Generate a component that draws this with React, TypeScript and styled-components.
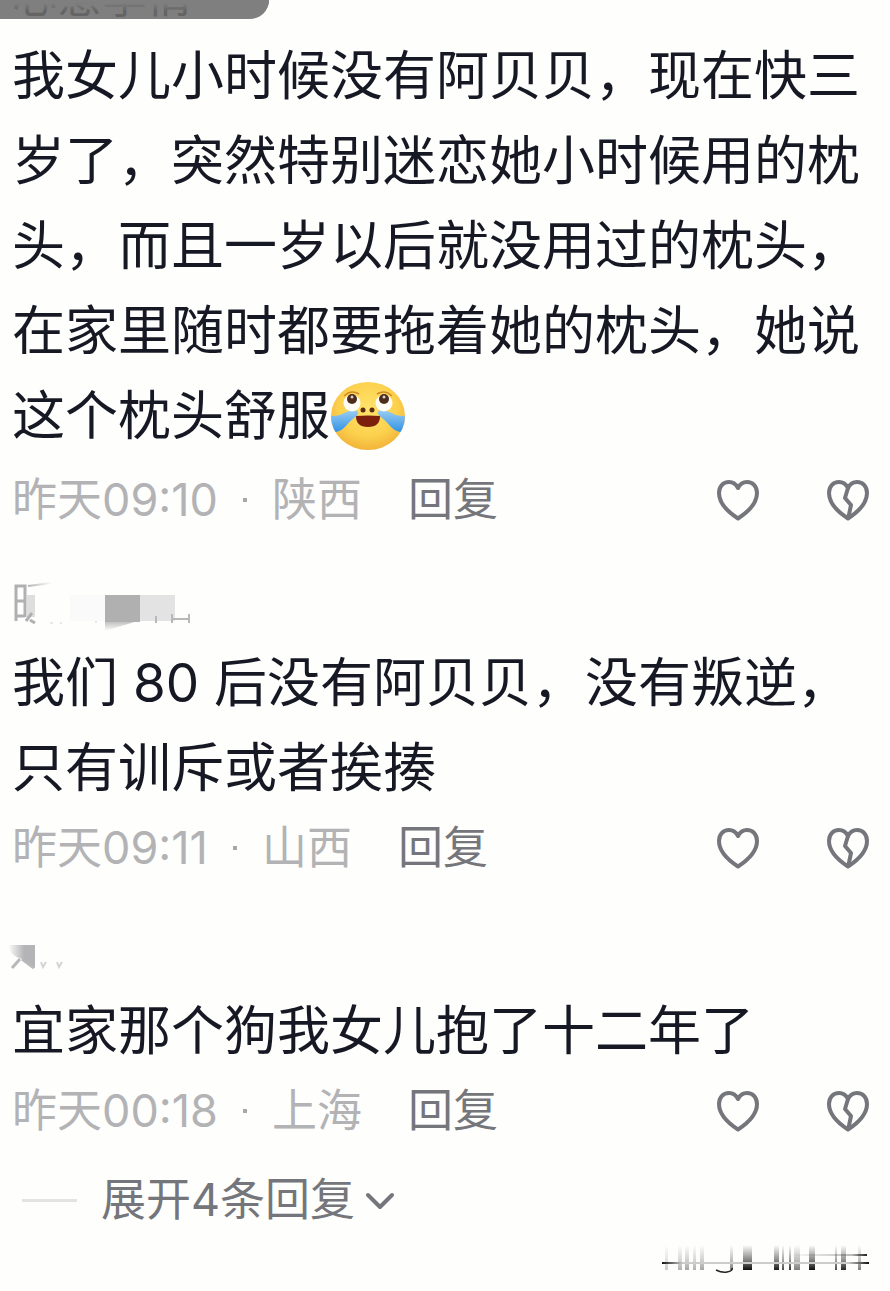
import React from "react";
import styled, { createGlobalStyle } from "styled-components";

const GlobalStyle = createGlobalStyle`
  * { box-sizing: border-box; }
  body {
    margin: 0;
    background: #fefefd;
    color: #161823;
    font-family: Inter, "Noto Sans CJK SC", sans-serif;
  }
  button {
    padding: 0;
    border: 0;
    background: none;
    color: inherit;
    font: inherit;
    cursor: pointer;
  }
`;

const Page = styled.main`
  position: relative;
  overflow: hidden;
`;

const Tab = styled.div`
  position: absolute;
  top: 0;
  left: 0;
  display: flex;
  align-items: flex-end;
  width: 269px;
  height: 19px;
  padding-left: 12px;
  overflow: hidden;
  border-bottom-right-radius: 20px;
  background: #7f7f7f;
  color: #646464;
  font-size: 45px;
  line-height: 44px;

  &::after {
    content: "";
    position: absolute;
    inset: 0 0 8px;
    background: linear-gradient(#7f7f7f 25%, transparent);
  }
`;

const Comment = styled.article`
  padding: 0 12px;
`;

const Name = styled.header<{ $first?: boolean }>`
  height: ${(p) => (p.$first ? "34px" : "104px")};
  padding-top: ${(p) => (p.$first ? "0" : "40px")};
`;

const NameArt = styled.svg`
  display: block;
  margin-left: -12px;
`;

const Body = styled.p`
  margin: 0;
  font-size: 53px;
  line-height: 85px;
`;

const Emoji = styled.svg`
  display: inline-block;
  height: 85px;
  vertical-align: middle;
`;

const Meta = styled.footer`
  display: flex;
  align-items: center;
  height: 74px;
  color: #b3b3b5;
  font-size: 45px;
  line-height: 60px;
`;

const Dot = styled.span`
  width: 4px;
  height: 4px;
  margin: 0 25px;
  background: #a8a8aa;
`;

const Reply = styled.button`
  margin-left: 46px;
  color: #75767b;
`;

const Actions = styled.div`
  display: flex;
  gap: 66px;
  margin-left: auto;
  margin-right: 8px;
`;

const IconButton = styled.button`
  display: flex;
`;

const Expand = styled.button`
  display: flex;
  align-items: center;
  height: 60px;
  margin: 22px 0 0 22px;
  color: #75767b;
  font-size: 45px;
  line-height: 60px;
`;

const Rule = styled.span`
  width: 55px;
  height: 3px;
  margin-right: 24px;
  background: #e3e3e4;
`;

const Watermark = styled.footer`
  display: flex;
  justify-content: flex-end;
  height: 61px;
  padding-right: 19px;
`;

function Heart({ broken = false }: { broken?: boolean }) {
  return (
    <svg width="44" height="44" viewBox="0 0 44 44" fill="none" stroke="#75767b" strokeWidth="4" strokeLinejoin="round" strokeLinecap="round">
      <path d="M22 10C20 6 17 4 13 4C7 4 3 8.500 3 15C3 25 12 34 22 40.500C32 34 41 25 41 15C41 8.500 37 4 31 4C27 4 24 6 22 10Z" />
      {broken && <path d="M22 10L19 20L25 27L22.500 39" />}
    </svg>
  );
}

function CryingFace() {
  return (
    <Emoji width="76" viewBox="0 6 76 85" role="img" aria-label="笑哭">
      <defs>
        <radialGradient id="skin" cx="50%" cy="40%" r="60%">
          <stop offset="0" stopColor="#ffe36b" />
          <stop offset="0.65" stopColor="#fcd14e" />
          <stop offset="1" stopColor="#f2b43a" />
        </radialGradient>
        <linearGradient id="tear" x1="0" y1="0" x2="0" y2="1">
          <stop offset="0" stopColor="#9ccdf0" />
          <stop offset="1" stopColor="#2f93e6" />
        </linearGradient>
        <clipPath id="face"><ellipse cx="38" cy="44" rx="37" ry="34" /></clipPath>
      </defs>
      <ellipse cx="38" cy="44" rx="37" ry="34" fill="url(#skin)" />
      <g clipPath="url(#face)">
        <path d="M0 44C12 45 16 38 24 38C31 39 28 43 24 46C17 51 15 58 6 60L0 60Z" fill="url(#tear)" />
        <path d="M76 44C64 45 60 38 52 38C45 39 48 43 52 46C59 51 61 58 70 60L76 60Z" fill="url(#tear)" />
      </g>
      <circle cx="22" cy="31" r="8.500" fill="#fffdf5" />
      <circle cx="54" cy="31" r="8.500" fill="#fffdf5" />
      <circle cx="22" cy="27" r="5" fill="#4d2c1d" />
      <circle cx="54" cy="27" r="5" fill="#4d2c1d" />
      <circle cx="22" cy="25" r="1.500" fill="#ddd0c5" />
      <circle cx="54" cy="25" r="1.500" fill="#ddd0c5" />
      <path d="M14 24Q21 17 29 22M47 22Q55 17 62 24" fill="none" stroke="#cf8b28" strokeWidth="1.500" />
      <circle cx="33" cy="38" r="2.500" fill="#5c2b12" />
      <circle cx="42" cy="38" r="2.500" fill="#5c2b12" />
      <path d="M26 44Q38 43 50 44Q50 55 38 55Q26 55 26 44Z" fill="#7c1f0d" />
    </Emoji>
  );
}

function MaskedNameWide() {
  return (
    <NameArt width="220" height="56" viewBox="0 0 220 56" aria-hidden="true">
      <defs>
        <linearGradient id="fadeDown" x1="0" y1="0" x2="0" y2="1">
          <stop offset="0" stopColor="#b4b4b5" />
          <stop offset="1" stopColor="#fefefd" />
        </linearGradient>
        <linearGradient id="fadeRight">
          <stop offset="0" stopColor="#b4b4b5" />
          <stop offset="1" stopColor="#fefefd" />
        </linearGradient>
      </defs>
      <path d="M16 44V9H25V40M16 24H25M16 39H25" fill="none" stroke="#b0b0b2" strokeWidth="3" />
      <path d="M28 9L52 6" stroke="url(#fadeRight)" strokeWidth="2" />
      <rect x="27" y="18" width="8" height="22" fill="#dededf" />
      <path d="M26 44L32 36M30 43L35 46" stroke="#b0b0b2" strokeWidth="3" />
      <path d="M50 46H53M60 46H62M95 45H97" stroke="#e8e8e8" strokeWidth="2" />
      <rect x="70" y="18" width="35" height="26" fill="#fafafa" />
      <path d="M105 43H141L105 54Z" fill="url(#fadeDown)" />
      <rect x="105" y="18" width="35" height="27" fill="#b0b0b1" />
      <rect x="140" y="18" width="35" height="26" fill="#e3e3e4" />
      <path d="M156 39V46M172 37V46M189 37V46M172 42H189" stroke="#b8b8ba" strokeWidth="2" />
    </NameArt>
  );
}

function MaskedNameShort() {
  return (
    <NameArt width="120" height="56" viewBox="0 0 120 56" aria-hidden="true">
      <defs>
        <linearGradient id="corner" x1="0" y1="0" x2="1" y2="0">
          <stop offset="0" stopColor="#fefefd" />
          <stop offset="0.600" stopColor="#b4b4b6" />
        </linearGradient>
      </defs>
      <path d="M8 20H35V43L22 34Q10 31 8 20Z" fill="url(#corner)" />
      <path d="M12 43L20 34M22 34L34 43" fill="none" stroke="#b8b8ba" strokeWidth="3" />
      <path d="M41 37L43 42L46 37M57 37L59 42L62 37" fill="none" stroke="#d4d4d5" strokeWidth="2" />
    </NameArt>
  );
}

const bars: [number, number, number][] = [
  [25, 3, 0.2], [38, 4, 0.3], [45, 4, 0.35], [53, 3, 0.3], [60, 4, 0.35],
  [90, 3, 0.5], [103, 9, 0.95], [134, 5, 0.9], [142, 2, 0.7], [149, 2, 0.8],
  [154, 6, 0.5], [169, 6, 0.95], [195, 2, 0.7], [201, 5, 0.85], [218, 3, 0.5],
];

function WatermarkArt() {
  return (
    <svg width="231" height="61" viewBox="0 0 231 61" aria-hidden="true">
      <defs>
        <linearGradient id="ink" x1="0" y1="0" x2="0" y2="1">
          <stop offset="0" stopColor="#000000" stopOpacity="0" />
          <stop offset="0.600" stopColor="#000000" stopOpacity="0.500" />
          <stop offset="1" stopColor="#000000" />
        </linearGradient>
        <linearGradient id="lineRight">
          <stop offset="0" stopColor="#222222" stopOpacity="0" />
          <stop offset="0.800" stopColor="#222222" stopOpacity="0.300" />
          <stop offset="1" stopColor="#222222" />
        </linearGradient>
        <linearGradient id="lineLeft">
          <stop offset="0" stopColor="#111111" />
          <stop offset="0.100" stopColor="#cccccc" />
          <stop offset="0.900" stopColor="#cccccc" />
          <stop offset="1" stopColor="#111111" />
        </linearGradient>
      </defs>
      {bars.map(([x, width, opacity]) => (
        <rect key={x} x={x} y="15" width={width} height="25" fill="url(#ink)" opacity={opacity} />
      ))}
      <path d="M76 40Q82 43 87 42Q93 41 92 38" fill="none" stroke="#222222" strokeWidth="1.500" />
      <rect x="150" y="24" width="77" height="2" fill="url(#lineRight)" />
      <rect x="22" y="32" width="207" height="2" fill="url(#lineLeft)" />
    </svg>
  );
}

function MetaRow({ time, place }: { time: string; place: string }) {
  return (
    <Meta>
      <time>{time}</time>
      <Dot />
      <span>{place}</span>
      <Reply type="button">回复</Reply>
      <Actions>
        <IconButton type="button" aria-label="喜欢"><Heart /></IconButton>
        <IconButton type="button" aria-label="不喜欢"><Heart broken /></IconButton>
      </Actions>
    </Meta>
  );
}

export default function App() {
  return (
    <Page>
      <GlobalStyle />
      <Tab>心意季情</Tab>
      <Comment>
        <Name $first />
        <Body>
          我女儿小时候没有阿贝贝，现在快三岁了，突然特别迷恋她小时候用的枕头，而且一岁以后就没用过的枕头，在家里随时都要拖着她的枕头，她说这个枕头舒服<CryingFace />
        </Body>
        <MetaRow time="昨天09:10" place="陕西" />
      </Comment>
      <Comment>
        <Name><MaskedNameWide /></Name>
        <Body>我们 80 后没有阿贝贝，没有叛逆，只有训斥或者挨揍</Body>
        <MetaRow time="昨天09:11" place="山西" />
      </Comment>
      <Comment>
        <Name><MaskedNameShort /></Name>
        <Body>宜家那个狗我女儿抱了十二年了</Body>
        <MetaRow time="昨天00:18" place="上海" />
      </Comment>
      <Expand type="button">
        <Rule />
        展开4条回复
        <svg width="46" height="30" viewBox="0 0 46 30" fill="none" stroke="#75767b" strokeWidth="4" strokeLinecap="round" strokeLinejoin="round" aria-hidden="true">
          <path d="M13 10L25 22L37 10" />
        </svg>
      </Expand>
      <Watermark><WatermarkArt /></Watermark>
    </Page>
  );
}
